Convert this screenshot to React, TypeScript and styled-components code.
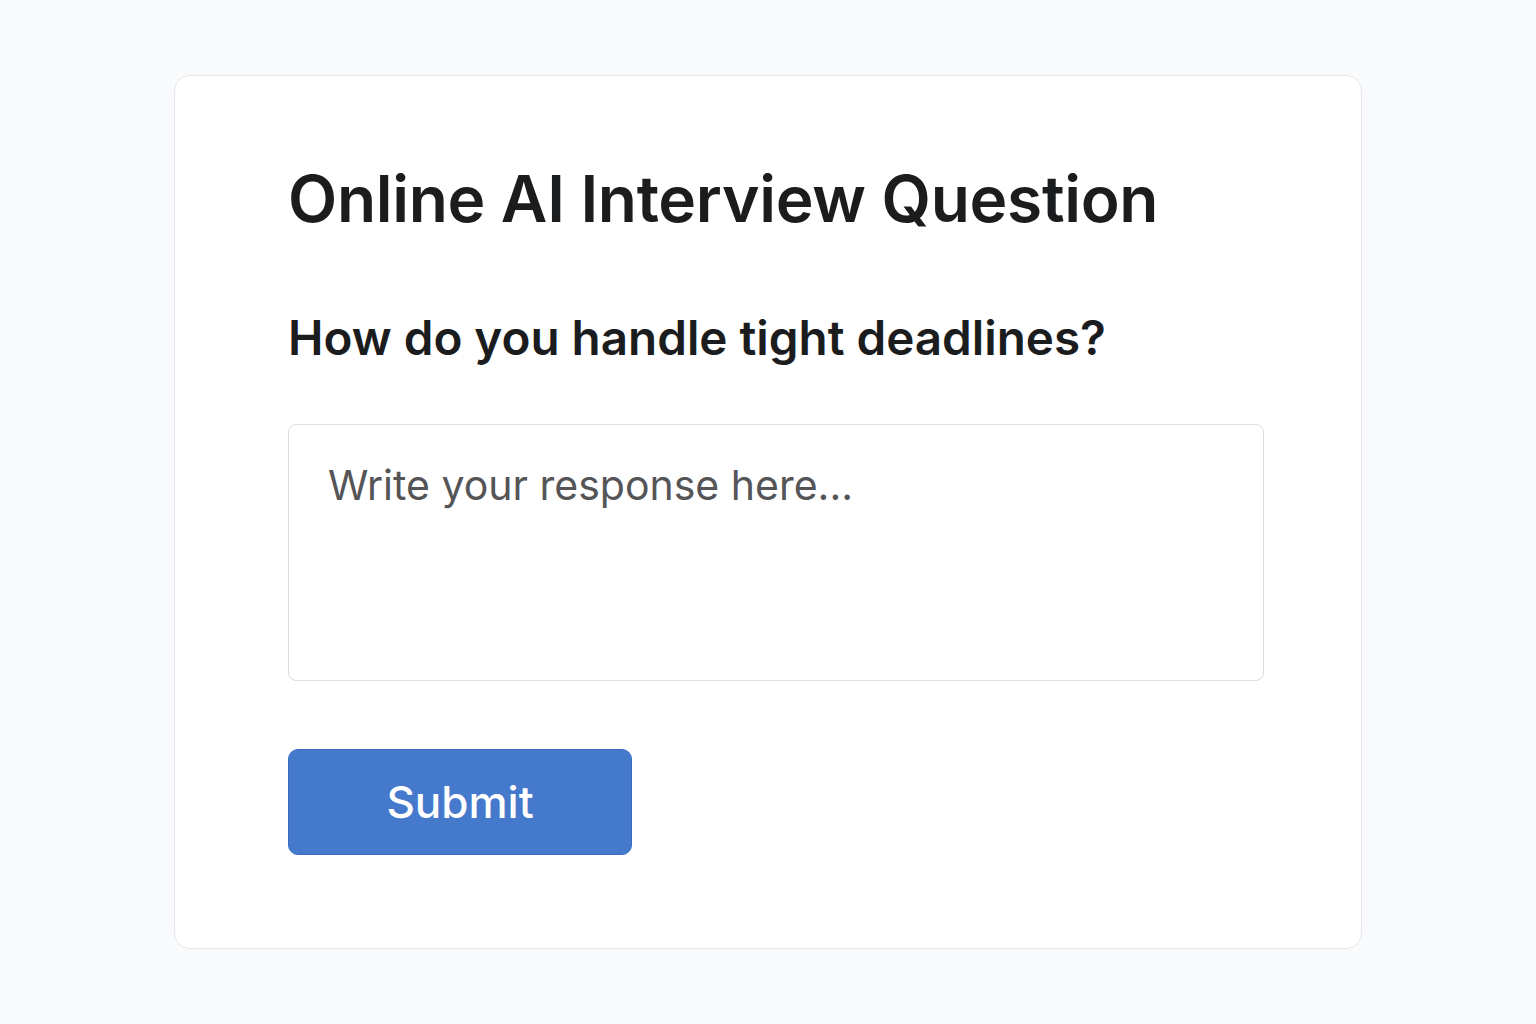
import React from "react";
import styled, { createGlobalStyle } from "styled-components";

const Global = createGlobalStyle`
  html, body { margin: 0; padding: 0; background: #f8fafc; }
  body { font-family: Inter, "Noto Sans", sans-serif; }
`;

const Page = styled.div`
  width: 1536px;
  height: 1024px;
  box-sizing: border-box;
  padding: 75px 174px 75px 174px;
  display: flex;
  flex-direction: column;
`;

const Card = styled.div`
  box-sizing: border-box;
  width: 1188px;
  height: 874px;
  background: #ffffff;
  border: 1.5px solid #e6e8eb;
  border-radius: 16px;
  padding: 84px 98px 0 113px;
  display: flex;
  flex-direction: column;
`;

const Title = styled.h1`
  margin: 0;
  font-size: 64px;
  font-weight: 600;
  line-height: 78px;
  color: #1b1c1e;
  letter-spacing: -0.3px;
`;

const Question = styled.h2`
  margin: 70px 0 0 0;
  font-size: 47.6px;
  font-weight: 600;
  line-height: 60px;
  color: #1b1c1e;
`;

const Answer = styled.textarea`
  margin-top: 56px;
  box-sizing: border-box;
  width: 976px;
  height: 257px;
  border: 1.5px solid #dcdee2;
  border-radius: 8px;
  padding: 30px 39px;
  font-family: Inter, "Noto Sans", sans-serif;
  font-size: 41px;
  line-height: 60px;
  color: #333;
  resize: none;
  outline: none;
  background: #fff;
  &::placeholder { color: #555558; }
`;

const SubmitButton = styled.button`
  margin-top: 68px;
  width: 344px;
  height: 106px;
  border: 1px solid #3a6dc0;
  border-radius: 10px;
  background: #4479cc;
  color: #fff;
  font-family: Inter, "Noto Sans", sans-serif;
  font-size: 44px;
  font-weight: 500;
  cursor: pointer;
`;

export default function App() {
  return (
    <>
      <Global />
      <Page>
        <Card>
          <Title>Online AI Interview Question</Title>
          <Question>How do you handle tight deadlines?</Question>
          <Answer placeholder="Write your response here..." />
          <SubmitButton>Submit</SubmitButton>
        </Card>
      </Page>
    </>
  );
}
